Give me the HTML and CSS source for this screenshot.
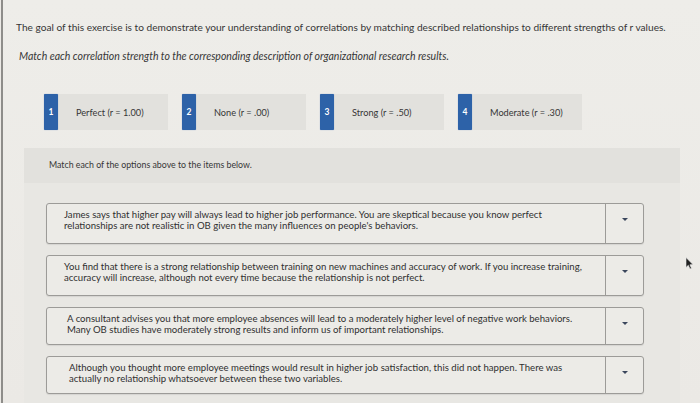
FILE: index.html
```html
<!DOCTYPE html>
<html>
<head>
<meta charset="utf-8">
<link rel="stylesheet" href="styles.css">
</head>
<body>
<div class="page">
  <p class="goal">The goal of this exercise is to demonstrate your understanding of correlations by matching described relationships to different strengths of r values.</p>
  <p class="instr">Match each correlation strength to the corresponding description of organizational research results.</p>

  <div class="options">
    <div class="opt"><span class="badge">1</span><span class="label">Perfect (r = 1.00)</span></div>
    <div class="opt"><span class="badge">2</span><span class="label">None (r = .00)</span></div>
    <div class="opt"><span class="badge">3</span><span class="label">Strong (r = .50)</span></div>
    <div class="opt"><span class="badge">4</span><span class="label">Moderate (r = .30)</span></div>
  </div>

  <div class="panel">
    <div class="panel-head">Match each of the options above to the items below.</div>
    <div class="rows">
      <div class="row">
        <div class="row-text"><span class="ln">James says that higher pay will always lead to higher job performance. You are skeptical because you know perfect</span><span class="ln">relationships are not realistic in OB given the many influences on people's behaviors.</span></div>
        <div class="drop"><span class="caret"></span></div>
      </div>
      <div class="row">
        <div class="row-text"><span class="ln">You find that there is a strong relationship between training on new machines and accuracy of work. If you increase training,</span><span class="ln">accuracy will increase, although not every time because the relationship is not perfect.</span></div>
        <div class="drop"><span class="caret"></span></div>
      </div>
      <div class="row short">
        <div class="row-text shift1"><span class="ln">A consultant advises you that more employee absences will lead to a moderately higher level of negative work behaviors.</span><span class="ln">Many OB studies have moderately strong results and inform us of important relationships.</span></div>
        <div class="drop"><span class="caret"></span></div>
      </div>
      <div class="row short">
        <div class="row-text shift2"><span class="ln">Although you thought more employee meetings would result in higher job satisfaction, this did not happen. There was</span><span class="ln">actually no relationship whatsoever between these two variables.</span></div>
        <div class="drop"><span class="caret"></span></div>
      </div>
    </div>
    <svg class="cursor" width="9" height="13" viewBox="0 0 9 13"><path d="M1 0.5 L1 10.5 L3.3 8.3 L5 12 L6.5 11.3 L4.9 7.8 L8 7.6 Z" fill="#222" stroke="#eee" stroke-width="0.6"/></svg>
  </div>
</div>
</body>
</html>
```

FILE: styles.css
```css
html, body {
  margin: 0;
  padding: 0;
  background: #eceae6;
}
.page {
  margin-left: 1px;
  border-left: 2px solid #8e8d8a;
  height: 403px;
  box-sizing: border-box;
  font-family: Lato, "Open Sans", sans-serif;
  color: #363636;
  background: linear-gradient(#eeede9, #ebe9e5);
  overflow: hidden;
  position: relative;
}
.goal {
  margin: 0;
  padding: 20px 0 0 13px;
  font-size: 10.15px;
  line-height: 14px;
  white-space: nowrap;
}
.instr {
  margin: 0;
  padding: 15px 0 0 16px;
  font-size: 10.5px;
  line-height: 14px;
  font-style: italic;
  white-space: nowrap;
}
.options {
  display: flex;
  gap: 14px;
  margin: 31px 0 0 41px;
  height: 36px;
}
.opt {
  display: flex;
  align-items: stretch;
  width: 124px;
  background: #e2e1dd;
}
.badge {
  width: 14px;
  background: #2d62a8;
  color: #fff;
  font-size: 8.5px;
  font-weight: bold;
  display: flex;
  align-items: center;
  justify-content: center;
  border-radius: 1px;
  box-shadow: 0 0 1px #6f8fbf;
}
.label {
  display: flex;
  align-items: center;
  padding-left: 18px;
  font-size: 9.2px;
}
.panel {
  margin: 18px 0 0 21px;
  width: 656px;
  height: 260px;
  background: #e8e7e3;
  position: relative;
}
.panel-head {
  background: #e2e1dd;
  height: 35px;
  box-sizing: border-box;
  padding: 12px 0 0 25px;
  font-size: 8.8px;
  line-height: 10px;
  white-space: nowrap;
}
.rows {
  display: flex;
  flex-direction: column;
  gap: 11px;
  padding: 20px 0 0 22px;
  width: 598px;
}
.row {
  display: flex;
  height: 41px;
  border: 1px solid #9c9b98;
  border-radius: 3px;
  background: #ecebe7;
  box-sizing: border-box;
  box-shadow: 0 1px 1px rgba(0,0,0,0.08);
}
.row.short {
  height: 38px;
}
.row-text {
  flex: 1;
  display: flex;
  flex-direction: column;
  padding: 6px 0 0 17px;
  font-size: 9.6px;
  line-height: 10.7px;
  color: #303030;
  white-space: nowrap;
  overflow: hidden;
}
.row-text.shift1 { padding-left: 20px; }
.row-text.shift2 { padding-left: 22px; }
.drop {
  width: 38px;
  border-left: 1px solid #9c9b98;
  display: flex;
  justify-content: center;
  padding-top: 14px;
  box-sizing: border-box;
}
.caret {
  width: 0;
  height: 0;
  border-left: 3px solid transparent;
  border-right: 3px solid transparent;
  border-top: 3px solid #3a465c;
}
.cursor {
  position: absolute;
  left: 661px;
  top: 109px;
}
```
